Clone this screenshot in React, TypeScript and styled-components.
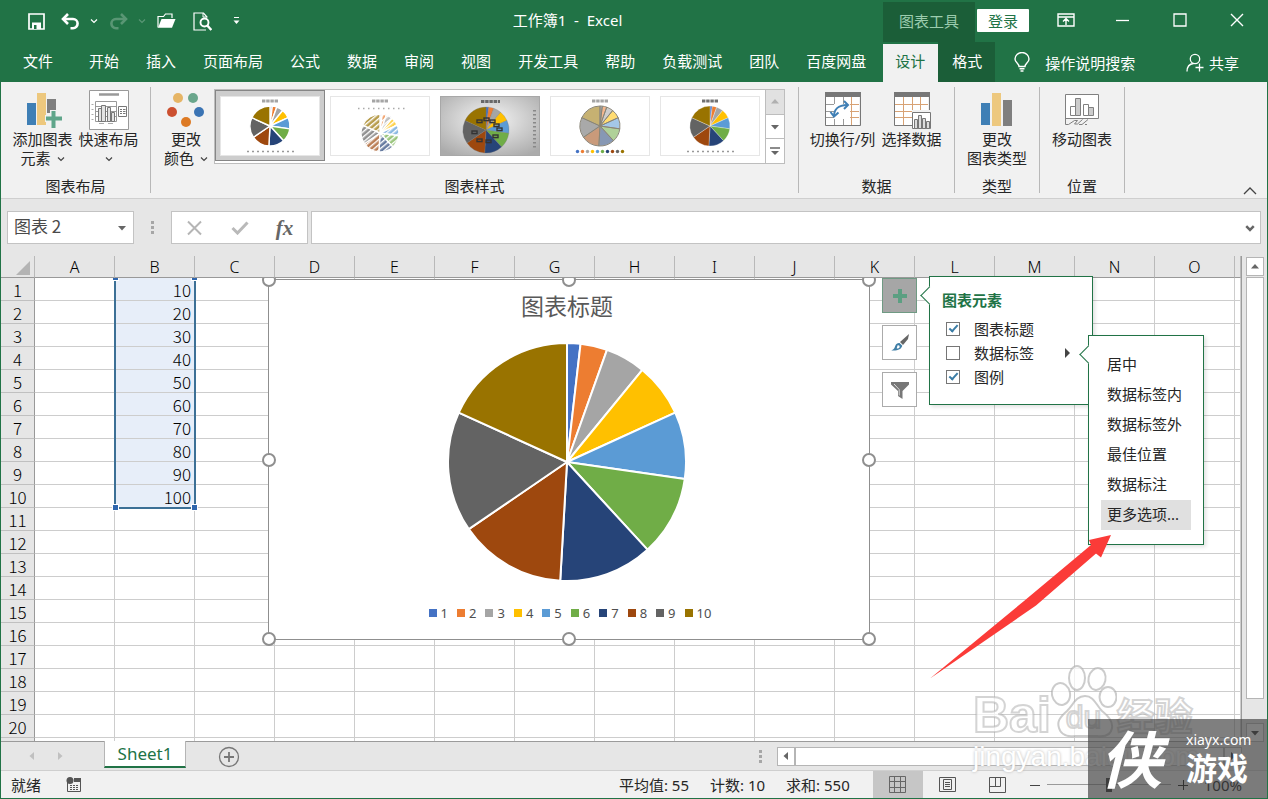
import React from 'react';
import styled, { createGlobalStyle, css } from 'styled-components';

const GREEN = '#217346';
const UI_FONT = '"Noto Sans", "Noto Sans CJK SC", sans-serif';
const CELL_FONT = '"Noto Sans CJK SC", sans-serif';

const PALETTE = ['#4472c4', '#ed7d31', '#a5a5a5', '#ffc000', '#5b9bd5', '#70ad47', '#264478', '#9e480e', '#636363', '#997300'];
const VALUES = [10, 20, 30, 40, 50, 60, 70, 80, 90, 100];
const COLUMNS = 'ABCDEFGHIJKLMNO'.split('');
const ROWS = Array.from({ length: 20 }, (_, i) => i + 1);

const GlobalStyle = createGlobalStyle`
  *, *::before, *::after { box-sizing: border-box; }
  body { margin: 0; background: #e6e6e6; font-family: ${UI_FONT}; font-size: 15px; color: #262626; overflow: hidden; }
  button, input { font: inherit; color: inherit; }
  button { border: 0; padding: 0; margin: 0; background: none; }
  svg { display: block; flex: none; }
`;

const Window = styled.div`
  position: relative;
  display: flex;
  flex-direction: column;
  height: 100vh;
  border: 1px solid ${GREEN};
  border-top: 0;
  overflow: hidden;
`;

/* ---------- title bar ---------- */

const TitleBar = styled.header`
  display: flex;
  height: 42px;
  background: ${GREEN};
  color: #fff;
`;

const QuickAccess = styled.div`
  display: flex;
  flex: none;
  padding-left: 19px;
`;

const QuickButton = styled.button<{ $w?: number; $dim?: boolean }>`
  display: flex;
  align-items: center;
  justify-content: center;
  width: ${(p) => p.$w ?? 36}px;
  opacity: ${(p) => (p.$dim ? 0.25 : 1)};
`;

const DocumentTitle = styled.h1`
  flex: 1;
  margin: 0;
  font-size: 15px;
  font-weight: 400;
  line-height: 40px;
  text-align: center;
  white-space: pre;
`;

const ContextTitle = styled.div`
  width: 92px;
  margin-top: 2px;
  line-height: 38px;
  text-align: center;
  background: #1b5e38;
  color: #9cccae;
`;

const LoginButton = styled.button`
  width: 52px;
  height: 23px;
  margin: 9px 8px 0 2px;
  line-height: 22px;
  background: #fff;
  color: ${GREEN};
  border-radius: 1px;
`;

const CaptionButton = styled.button`
  display: flex;
  align-items: center;
  justify-content: center;
  width: 57px;
  height: 40px;
  &:last-child { margin-right: 2px; }
`;

/* ---------- tab strip ---------- */

const TabStrip = styled.nav`
  display: flex;
  height: 40px;
  background: ${GREEN};
  color: #fff;
`;

const Tab = styled.button<{ $kind?: 'file' | 'active' | 'context' }>`
  flex: none;
  padding: 0 13px 2px 14px;
  line-height: 36px;
  white-space: nowrap;
  ${(p) => p.$kind === 'file' && css`padding: 0 22px 2px;`}
  ${(p) => p.$kind === 'active' && css`
    margin-left: 4px;
    padding: 0 13px 4px 12px;
    background: #f1f1f1;
    color: ${GREEN};
    margin-top: 2px;
    line-height: 34px;
  `}
  ${(p) => p.$kind === 'context' && css`background: #1b5e38;`}
`;

const TellMe = styled.button`
  display: flex;
  align-items: center;
  gap: 15px;
  margin-left: 19px;
  white-space: nowrap;
`;

const Share = styled(TellMe)`
  gap: 5px;
  margin: 1px 28px 0 auto;
`;

/* ---------- ribbon ---------- */

const Ribbon = styled.section`
  position: relative;
  display: flex;
  flex: none;
  height: 117px;
  background: #f1f1f1;
  border-bottom: 1px solid #cfcfcf;
`;

const Group = styled.div<{ $w: number }>`
  display: flex;
  flex-direction: column;
  justify-content: space-between;
  flex: none;
  width: ${(p) => p.$w}px;
  margin: 5px 0;
  border-right: 1px solid #b8b8b8;
`;

const GroupBody = styled.div`
  display: flex;
  justify-content: center;
`;

const StyleBody = styled(GroupBody)`
  padding-right: 6px;
`;

const GroupLabel = styled.div`
  line-height: 20px;
  margin-bottom: -3px;
  text-align: center;
`;

const RibbonButton = styled.button<{ $w: number }>`
  display: flex;
  flex-direction: column;
  align-items: center;
  flex: none;
  width: ${(p) => p.$w}px;
  padding-top: 3px;
  line-height: 19px;
  white-space: nowrap;
`;

const IconSlot = styled.span`
  display: flex;
  align-items: center;
  justify-content: center;
  height: 40px;
`;

const Line = styled.span`
  display: flex;
  align-items: center;
  justify-content: center;
  gap: 6px;
  height: 19px;
`;

const Gallery = styled.div`
  display: flex;
  width: 571px;
  height: 75px;
  margin-top: 2px;
  background: #fff;
  border: 1px solid #bdbdbd;
`;

const StyleChoice = styled.button<{ $on?: boolean }>`
  width: 110px;
  height: 71px;
  padding: 4px;
  border: 1px solid ${(p) => (p.$on ? '#868686' : 'transparent')};
  background: ${(p) => (p.$on ? '#cdcdcd' : 'none')};
`;

const GalleryScroll = styled.div`
  display: flex;
  flex-direction: column;
  width: 19px;
  border-left: 1px solid #bdbdbd;
`;

const GalleryStep = styled.button<{ $off?: boolean }>`
  display: flex;
  flex: 1;
  align-items: center;
  justify-content: center;
  background: ${(p) => (p.$off ? '#e1e1e1' : '#fff')};
  & + & { border-top: 1px solid #bdbdbd; }
`;

const Collapse = styled.button`
  align-self: flex-end;
  margin: 0 10px 3px auto;
`;

/* ---------- formula bar ---------- */

const FormulaBar = styled.div`
  display: flex;
  align-items: center;
  flex: none;
  height: 57px;
  padding: 0 6px;
  background: #e6e6e6;
`;

const Field = styled.div<{ $w?: number }>`
  display: flex;
  align-items: center;
  flex: ${(p) => (p.$w ? 'none' : '1')};
  width: ${(p) => (p.$w ? `${p.$w}px` : 'auto')};
  height: 33px;
  min-width: 0;
  background: #fff;
  border: 1px solid #c3c3c3;
`;

const FieldInput = styled.input`
  flex: 1;
  min-width: 0;
  height: 30px;
  padding: 0 6px 4px;
  border: 0;
  outline: 0;
  background: none;
  font-family: ${CELL_FONT};
  font-size: 17px;
  color: #4a4a4a;
`;

const FieldButton = styled.button<{ $w: number }>`
  display: flex;
  align-items: center;
  justify-content: center;
  width: ${(p) => p.$w}px;
  height: 31px;
`;

const Grip = styled.span<{ $w: number }>`
  display: flex;
  justify-content: center;
  flex: none;
  width: ${(p) => p.$w}px;
`;

const FxMark = styled.span`
  font-family: "Liberation Serif", serif;
  font-size: 21px;
  line-height: 28px;
  font-style: italic;
  font-weight: 700;
  color: #666;
`;

/* ---------- sheet ---------- */

const SheetArea = styled.main`
  position: relative;
  display: flex;
  flex: 1;
  min-height: 0;
  background: #e6e6e6;
`;

const GridViewport = styled.div`
  position: relative;
  flex: 1;
  min-width: 0;
  overflow: hidden;
  background: #fff;
  border-right: 1px solid #9b9b9b;
  border-bottom: 1px solid #9b9b9b;
`;

const Grid = styled.table`
  width: 100%;
  table-layout: fixed;
  border-collapse: separate;
  border-spacing: 0;
  font-family: ${CELL_FONT};
  font-size: 17px;
  font-weight: 300;
  color: #000;
`;

const HeadCell = styled.th`
  height: 22px;
  padding: 2px 0 0;
  line-height: 19px;
  font-family: "Noto Sans", sans-serif;
  font-size: 16px;
  font-weight: 300;
  background: #e6e6e6;
  border-right: 1px solid #b9b9b9;
  border-bottom: 1px solid #999;
  svg { margin: 0 4px 0 auto; }
`;

const RowHead = styled.th`
  height: 23px;
  padding: 2px 0 0;
  line-height: 20px;
  font-weight: 300;
  background: #e6e6e6;
  border-right: 1px solid #999;
  border-bottom: 1px solid #c0c0c0;
`;

const Cell = styled.td<{ $picked?: boolean }>`
  height: 23px;
  padding: 2px 3px 0 0;
  line-height: 20px;
  text-align: right;
  background: ${(p) => (p.$picked ? '#e7eef9' : '#fff')};
  border-right: 1px solid #cdcdcd;
  border-bottom: 1px solid #cdcdcd;
`;

const ObjectLayer = styled.div`
  position: absolute;
  inset: 22px 0 0 0;
  overflow: hidden;
`;

const RangeOutline = styled.div`
  position: absolute;
  left: 113px;
  top: 0;
  width: 82px;
  height: 231px;
  border: 2px solid #3c7096;
  border-top: 0;
`;

const RangeHandle = styled.span<{ $right?: boolean; $bottom?: boolean }>`
  position: absolute;
  ${(p) => (p.$right ? 'right: -3px;' : 'left: -3px;')}
  ${(p) => (p.$bottom ? 'bottom: -3px;' : 'top: -3px;')}
  width: 5px;
  height: 5px;
  background: #2f66ae;
  outline: 1px solid #fff;
`;

const ChartFrame = styled.figure`
  position: absolute;
  left: 267px;
  top: 1px;
  display: flex;
  flex-direction: column;
  align-items: center;
  width: 602px;
  height: 361px;
  margin: 0;
  padding: 12px 4px 0 0;
  background: #fff;
  border: 1px solid #8f8f8f;
`;

const ChartTitle = styled.figcaption`
  margin-bottom: 23px;
  line-height: 28px;
  font-size: 23px;
  color: #595959;
`;

const Legend = styled.ul`
  display: flex;
  gap: 9px;
  margin: 24px 0 0 6px;
  padding: 0;
  list-style: none;
  font-size: 13px;
  line-height: 16px;
  color: #4f4f4f;
`;

const LegendItem = styled.li<{ $color: string }>`
  display: flex;
  align-items: center;
  gap: 4px;
  &::before { content: ''; width: 8px; height: 8px; background: ${(p) => p.$color}; }
`;

const Handle = styled.span<{ $x: number; $y: number }>`
  position: absolute;
  left: ${(p) => p.$x}%;
  top: ${(p) => p.$y}%;
  width: 14px;
  height: 14px;
  margin: -7px;
  background: #fff;
  border: 2px solid #8f8f8f;
  border-radius: 50%;
`;

const ChartTools = styled.div`
  position: absolute;
  left: 881px;
  top: 22px;
  display: flex;
  flex-direction: column;
  gap: 12px;
`;

const ChartTool = styled.button<{ $on?: boolean }>`
  display: flex;
  align-items: center;
  justify-content: center;
  width: 35px;
  height: 35px;
  background: ${(p) => (p.$on ? '#a6a6a6' : '#fff')};
  border: 1px solid ${(p) => (p.$on ? '#6f9a83' : '#ababab')};
`;

const Callout = styled.div`
  position: absolute;
  background: #fff;
  border: 1px solid ${GREEN};
  box-shadow: 2px 2px 4px rgba(0, 0, 0, 0.12);
  &::before {
    content: '';
    position: absolute;
    left: -7px;
    top: 12px;
    width: 13px;
    height: 13px;
    background: #fff;
    border: solid ${GREEN};
    border-width: 0 0 1px 1px;
    transform: rotate(45deg);
  }
`;

const ElementsCallout = styled(Callout)`
  left: 928px;
  top: 20px;
  width: 164px;
  height: 129px;
  padding: 11px 12px 0;
`;

const CalloutHeading = styled.h2`
  margin: 0 0 5px;
  font-size: 15px;
  line-height: 24px;
  font-weight: 700;
  color: ${GREEN};
`;

const ElementRow = styled.label`
  display: flex;
  align-items: center;
  height: 24px;
  padding-left: 4px;
  line-height: 20px;
`;

const TickBox = styled.input`
  appearance: none;
  position: relative;
  width: 14px;
  height: 14px;
  margin: 0 14px 0 0;
  background: #fff;
  border: 1px solid #767676;
  &:checked::after {
    content: '';
    position: absolute;
    left: 4px;
    top: 0;
    width: 5px;
    height: 9px;
    border: solid #3a7ca5;
    border-width: 0 2px 2px 0;
    transform: rotate(42deg);
  }
`;

const RowText = styled.span`
  padding-bottom: 1px;
`;

const SubArrow = styled.svg`
  margin-left: auto;
  margin-right: 9px;
`;

const LabelsCallout = styled(Callout)`
  left: 1087px;
  top: 79px;
  width: 116px;
  height: 210px;
  padding: 14px 12px;
`;

const MenuItem = styled.button<{ $on?: boolean }>`
  display: block;
  width: 90px;
  height: 30px;
  padding: 0 0 4px 6px;
  text-align: left;
  white-space: nowrap;
  background: ${(p) => (p.$on ? '#e0e0e0' : 'none')};
`;

const VScroll = styled.div`
  display: flex;
  flex-direction: column;
  width: 25px;
  padding: 1px 3px 0 4px;
`;

const ScrollButton = styled.button`
  display: flex;
  align-items: center;
  justify-content: center;
  flex: none;
  width: 18px;
  height: 19px;
  background: #fff;
  border: 1px solid #b5b5b5;
`;

const VThumb = styled.div`
  flex: 1;
  margin: 1px 0 24px;
  background: #fff;
  border: 1px solid #b5b5b5;
`;

/* ---------- sheet tabs and status bar ---------- */

const SheetTabs = styled.div`
  display: flex;
  flex: none;
  height: 28px;
  background: #e6e6e6;
`;

const SheetNav = styled.div`
  display: flex;
  align-items: center;
  gap: 18px;
  width: 103px;
  padding-left: 26px;
`;

const SheetTab = styled.button`
  width: 82px;
  height: 27px;
  margin-top: -1px;
  z-index: 1;
  line-height: 22px;
  font-size: 17px;
  color: ${GREEN};
  background: #fff;
  border: solid #b5b5b5;
  border-width: 0 1px;
  border-bottom: 2px solid ${GREEN};
`;

const AddSheet = styled.button`
  margin: 4px auto 0 32px;
  height: 22px;
`;

const HScroll = styled.div`
  display: flex;
  align-items: center;
  width: 490px;
  padding-right: 25px;
`;

const HThumb = styled.div`
  flex: 1;
  height: 19px;
  background: #fff;
  border: 1px solid #b5b5b5;
`;

const StatusBar = styled.footer`
  display: flex;
  align-items: center;
  flex: none;
  height: 28px;
  padding: 0 25px 0 10px;
  background: #f1f1f1;
  border-top: 1px solid #cfcfcf;
  white-space: nowrap;
`;

const Ready = styled.span`
  margin-right: 25px;
`;

const Summary = styled.span`
  margin-right: 21px;
`;

const Stats = styled.div`
  display: flex;
  margin-left: auto;
  margin-right: 2px;
`;

const ViewButton = styled.button<{ $on?: boolean }>`
  display: flex;
  align-items: center;
  justify-content: center;
  width: 50px;
  height: 27px;
  background: ${(p) => (p.$on ? '#c6c6c6' : 'none')};
`;

const ZoomStep = styled.button`
  width: 24px;
  display: flex;
  justify-content: center;
`;

const ZoomSlider = styled.input`
  appearance: none;
  width: 124px;
  height: 16px;
  margin: 0;
  background: linear-gradient(#9a9a9a, #9a9a9a) center / 100% 1px no-repeat;
  &::-webkit-slider-thumb {
    appearance: none;
    width: 6px;
    height: 14px;
    background: #222;
  }
`;

const ZoomValue = styled.span`
  margin-left: 9px;
  color: #000;
`;

/* ---------- overlays ---------- */

const PointerArrow = styled.svg`
  position: absolute;
  left: 928px;
  top: 278px;
`;

const BaiduMark = styled.div`
  position: absolute;
  right: 64px;
  bottom: 24px;
  width: 236px;
  height: 112px;
  color: rgba(255, 255, 255, 0.7);
  -webkit-text-stroke: 2px rgba(170, 170, 170, 0.5);
  pointer-events: none;
`;

const BaiduRow = styled.div`
  display: flex;
  align-items: flex-end;
  height: 76px;
  padding-left: 6px;
  font-family: "Liberation Sans", "Noto Sans CJK SC", sans-serif;
  font-size: 50px;
  font-weight: 700;
  line-height: 46px;
`;

const BaiduPaw = styled.span`
  position: relative;
  width: 66px;
  height: 76px;
`;

const BaiduDu = styled.span`
  position: absolute;
  left: 15px;
  bottom: 3px;
  font-size: 32px;
  line-height: 36px;
  font-weight: 400;
`;

const BaiduWord = styled.span`
  font-size: 38px;
  line-height: 42px;
`;

const BaiduAddress = styled.div`
  padding-left: 6px;
  font-family: "Liberation Sans", sans-serif;
  font-size: 28px;
  line-height: 38px;
  color: #fff;
  -webkit-text-stroke: 0;
  text-shadow: 0 0 3px #b4b4b4;
`;

const GameBadge = styled.div`
  position: absolute;
  right: -1px;
  bottom: -1px;
  display: flex;
  width: 180px;
  height: 80px;
  padding-left: 12px;
  background: rgba(72, 72, 72, 0.7);
  color: #fff;
`;

const BadgeSeal = styled.span`
  width: 86px;
  font-size: 62px;
  line-height: 80px;
  font-style: italic;
  font-weight: 700;
`;

const BadgeText = styled.span`
  display: flex;
  flex-direction: column;
  padding-top: 11px;
  font-size: 14px;
  line-height: 20px;
`;

const BadgeName = styled.strong`
  font-size: 31px;
  line-height: 36px;
`;

/* ---------- drawings ---------- */

function slicePath(cx: number, cy: number, r: number, index: number) {
  const total = VALUES.reduce((a, b) => a + b, 0);
  const before = VALUES.slice(0, index).reduce((a, b) => a + b, 0);
  const a0 = (before / total) * Math.PI * 2;
  const a1 = ((before + VALUES[index]) / total) * Math.PI * 2;
  const pt = (a: number) => `${(cx + r * Math.sin(a)).toFixed(2)} ${(cy - r * Math.cos(a)).toFixed(2)}`;
  return `M${cx} ${cy}L${pt(a0)}A${r} ${r} 0 0 1 ${pt(a1)}Z`;
}

function Slices({ cx, cy, r, gap, line = '#fff' }: { cx: number; cy: number; r: number; gap: number; line?: string }) {
  return (
    <g stroke={line} strokeWidth={gap} strokeLinejoin="round">
      {PALETTE.map((c, i) => <path key={c} d={slicePath(cx, cy, r, i)} fill={c} />)}
    </g>
  );
}

function Thumbnail({ kind }: { kind: number }) {
  const cy = [30, 37, 34, 30, 30][kind];
  const cx = [50, 50, 46, 50, 50][kind];
  const r = [20, 19, 23, 20, 20][kind];
  return (
    <svg width="100" height="60" viewBox="0 0 100 60">
      <defs>
        <radialGradient id={`bg${kind}`} cx="0.5" cy="0.4" r="0.7">
          <stop offset="0" stopColor="#f6f6f6" /><stop offset="1" stopColor="#ababab" />
        </radialGradient>
        <pattern id={`hatch${kind}`} width="4" height="4" patternUnits="userSpaceOnUse" patternTransform="rotate(50)">
          <rect width="1.4" height="4" fill="#fff" />
        </pattern>
      </defs>
      <rect x="0.5" y="0.5" width="99" height="59" fill={kind === 2 ? `url(#bg${kind})` : '#fff'} stroke={kind === 2 ? '#a8a8a8' : '#e6e6e6'} />
      <g opacity={kind === 1 ? 0.7 : kind === 3 ? 0.55 : 1}>
        <Slices cx={cx} cy={cy} r={r} gap={kind === 0 || kind === 1 ? 1.4 : 0.3} line={kind === 2 ? '#777' : '#fff'} />
      </g>
      {kind === 1 && <circle cx={cx} cy={cy} r={r} fill="url(#hatch1)" />}
      {kind === 3 && <g fill="none" stroke="#8a8577" strokeWidth="1">{VALUES.map((v, i) => <path key={v} d={slicePath(cx, cy, r, i)} />)}</g>}
      {kind === 2 && (
        <g fill="none" stroke="#333" strokeWidth="1.4">
          {[[37, 24], [44, 22], [50, 24], [54, 28], [57, 32], [53, 39], [46, 44], [37, 43], [32, 35]].map(([x, y]) => (
            <rect key={`${x}-${y}`} x={x} y={y} width="5" height="2.6" />
          ))}
        </g>
      )}
      <path d={kind === 2 ? 'M41 5.5h19' : 'M42 5h16'} stroke={kind === 2 || kind === 4 ? '#444' : '#888'} strokeWidth="3" strokeDasharray="3.4 0.8" opacity="0.75" />
      {kind === 2 && <path d="M94.500 14v40" stroke="#888" strokeWidth="3" strokeDasharray="1.500 2.500" />}
      {kind === 1 && <path d="M28 12.500h47" stroke="#aaa" strokeWidth="1.500" strokeDasharray="1.500 3.500" />}
      {(kind === 0 || kind === 4) && <path d="M27 55.500h48" stroke="#999" strokeWidth="1.500" strokeDasharray="2 3" />}
      {kind === 3 && PALETTE.map((c, i) => <circle key={c} cx={27.5 + i * 5} cy="55.5" r="1.7" fill={c} />)}
    </svg>
  );
}

const Chevron = ({ size = 8, color = '#444', width = 1.2 }: { size?: number; color?: string; width?: number }) => (
  <svg width={size} height={size} viewBox="0 0 8 8" fill="none" stroke={color} strokeWidth={width}><path d="M1 2.500l3 3 3-3" /></svg>
);

const Triangle = ({ dir, color = '#666' }: { dir: 'up' | 'down' | 'left' | 'right'; color?: string }) => {
  const d = { up: 'M1 6.500h8L5 2z', down: 'M1 3h8L5 7.500z', left: 'M7 1v8L2.500 5z', right: 'M3 1v8l4.500-4z' }[dir];
  return <svg width="10" height="10" viewBox="0 0 10 10"><path d={d} fill={color} /></svg>;
};

const Dots = () => (
  <svg width="4" height="14" viewBox="0 0 4 14" fill="#a6a6a6"><path d="M0 0h3v3H0zM0 5h3v3H0zM0 10h3v3H0z" /></svg>
);

const SaveIcon = () => (
  <svg width="17" height="17" viewBox="0 0 17 17"><path d="M1 1h15v15H1z" fill="none" stroke="#fff" strokeWidth="1.700" /><path d="M4 9.500h9V16H4z" fill="#fff" /><path d="M6 12h2.500v4H6z" fill={GREEN} /></svg>
);

const UndoIcon = ({ flip }: { flip?: boolean }) => (
  <svg width="19" height="17" viewBox="0 0 19 17" fill="none" stroke="#fff" strokeWidth="2.600">
    <g transform={flip ? 'translate(19 0) scale(-1 1)' : undefined}>
      <path d="M7 1L2 6l5 5" /><path d="M2.500 6H12a4.600 4.600 0 0 1 0 9.200H9.500" />
    </g>
  </svg>
);

const OpenIcon = () => (
  <svg width="19" height="16" viewBox="0 0 19 16"><path d="M1 14.500V3.500h5.500l2-2.500H15v4" fill="none" stroke="#fff" strokeWidth="1.200" /><path d="M4.500 6H18.500L15 14.800H1z" fill="#fff" /></svg>
);

const PreviewIcon = () => (
  <svg width="19" height="19" viewBox="0 0 19 19" fill="none" stroke="#fff"><path d="M14 5.500V5L10.500 1H1v17h12" strokeWidth="1.200" /><path d="M10 1v4h4" /><circle cx="11.500" cy="10.500" r="4" strokeWidth="1.900" /><path d="M14.300 13.500l4 4.500" strokeWidth="2.400" /></svg>
);

const BarsIcon = ({ plus }: { plus?: boolean }) => (
  <svg width={plus ? 40 : 32} height="36" viewBox={plus ? '-4 0 40 36' : '0 0 32 36'}>
    <path d="M0 11h9v22H0z" fill="#3f7fb5" /><path d={plus ? 'M10 1h9v32h-9z' : 'M11 1h9v33h-9z'} fill="#edc87e" /><path d={plus ? 'M20 7h9v14h-9z' : 'M22 8h9v26h-9z'} fill="#7f7f7f" />
    {plus && <path d="M18 23h5v-5h7v5h5v7h-5v6h-7v-6h-5z" fill="#f1f1f1" />}
    {plus && <path d="M19 24.500h5.500V19h4v5.500H35v4h-6.500V36h-4v-7.500H19z" fill="#5fa58a" />}
  </svg>
);

const LayoutIcon = () => (
  <svg width="40" height="40" viewBox="0 0 40 40" fill="none" stroke="#777">
    <path d="M.5.5h39v39H.5z" fill="#fff" stroke="#999" /><path d="M10 4.500h20" stroke="#999" strokeWidth="2.500" />
    <path d="M6.500 11.500h21v20h-21zM6.500 16.500h21M6.500 21.500h21M6.500 26.500h21" stroke="#999" />
    <path d="M9.500 18.500h3v13h-3zM12.500 15.500h4v16h-4zM18.500 17.500h3v14h-3zM22.500 22.500h3v9h-3z" fill="#e3e3e3" />
    <path d="M29.500 16.500h8v10h-8zM31 19.500h2M31 21.500h2M31 23.500h2M34 19.500h2.500M34 21.500h2.500M34 23.500h2.500" />
    <path d="M2.500 14.500h2M2.500 19.500h2M2.500 24.500h2M2.500 29.500h2M10 33.500h5M19 33.500h5" stroke="#aaa" />
  </svg>
);

const ColorsIcon = () => (
  <svg width="38" height="36" viewBox="0 0 38 36"><circle cx="11" cy="6" r="5" fill="#e6b566" /><circle cx="26" cy="6" r="5" fill="#6aa68c" /><circle cx="5" cy="20" r="5" fill="#cc5030" /><circle cx="32" cy="20" r="5" fill="#3b74b4" /><circle cx="19" cy="30" r="5" fill="#dd7a24" /></svg>
);

const TableIcon = ({ swap }: { swap?: boolean }) => (
  <svg width="38" height="37" viewBox="-1 0 38 37" fill="none">
    <path d="M1 4h33v29H1z" fill="#fff" /><path d="M1 12.500h33M1 19.500h33M1 25.500h33M9.500 5v28M18.500 5v28M26.500 5v28" stroke={swap ? '#9a9a9a' : '#d8a274'} />
    {swap && <path d="M18.500 12.500H34M18.500 19.500H34M18.500 25.500H34M26.500 5v28" stroke="#d8a274" />}
    <path d="M.5 1v32.500h35V1" stroke="#777" /><path d="M0 0h36v5H0z" fill="#777" />
    {swap && <g stroke="#3f7fb5" strokeWidth="2"><path d="M9 12h16v15H9z" fill="#fff" stroke="none" /><path d="M9 24c0-6 4-11 13-11" /><path d="M19 9l4 4-4 4M5.500 20L9 24.500l4.500-4" /></g>}
    {!swap && <g stroke="#777"><path d="M18 18h19v19H18z" fill="#f1f1f1" stroke="none" /><path d="M18.500 20.500h18v16h-18z" fill="#fff" /><path d="M20.500 27.500h3v9h-3zM24.500 23.500h3v13h-3zM28.500 26.500h3v10h-3zM32.500 29.500h3v7h-3z" fill="#ddd" /></g>}
  </svg>
);

const MoveIcon = () => (
  <svg width="35" height="32" viewBox="0 0 35 32" fill="none" stroke="#808080">
    <path d="M.5.5h33v24H.5z" fill="#fff" /><path d="M5.500 12.500h5v9h-5z" fill="#fff" /><path d="M10.500 4.500h5v17h-5z" fill="#ccc" /><path d="M18.500 10.500h5v11h-5z" fill="#fff" /><path d="M23.500 13.500h5v8h-5z" fill="#ccc" />
    <path d="M.5 24v6.500h3l6-4h3l-3 3.500h3l5-4.500M14 30.500h3l6-5M20 30.500h2" />
  </svg>
);

const BrushIcon = () => (
  <svg width="20" height="20" viewBox="0 0 20 20"><path d="M19 1l-1 5-5 6-3-3z" fill="#666" /><path d="M9.500 10l2.800 2.800c-1 3.500-4.500 5.200-11 4.700 3-1 3.200-2.600 4-4.700.8-2 2.300-3 4.200-2.800z" fill="#3f7ea6" /><path d="M7.500 12.500c1.500-.5 2.500.5 2 2-.6 1-1.800 1.200-2.800.8" fill="#fff" /></svg>
);

const FilterIcon = () => (
  <svg width="20" height="20" viewBox="0 0 20 20"><path d="M1 2h18v2.500L12.500 11v8L8 16v-5L1 4.500z" fill="#777" /><path d="M4 4l5.200 5.500v6" fill="none" stroke="#ddd" /></svg>
);

/* ---------- sections ---------- */

const TABS = ['开始', '插入', '页面布局', '公式', '数据', '审阅', '视图', '开发工具', '帮助', '负载测试', '团队', '百度网盘'];
const HANDLES = [[0, 0], [50, 0], [100, 0], [0, 50], [100, 50], [0, 100], [50, 100], [100, 100]];

function Header() {
  return (
    <>
      <TitleBar>
        <QuickAccess>
          <QuickButton $w={32} aria-label="保存"><SaveIcon /></QuickButton>
          <QuickButton aria-label="撤消"><UndoIcon /></QuickButton>
          <QuickButton $w={12} aria-label="撤消列表"><Chevron size={8} color="#fff" /></QuickButton>
          <QuickButton $dim aria-label="恢复"><UndoIcon flip /></QuickButton>
          <QuickButton $w={12} $dim aria-label="恢复列表"><Chevron size={8} color="#fff" /></QuickButton>
          <QuickButton aria-label="打开"><OpenIcon /></QuickButton>
          <QuickButton aria-label="打印预览"><PreviewIcon /></QuickButton>
          <QuickButton $w={32} aria-label="自定义">
            <svg width="7" height="8" viewBox="0 0 7 8"><path d="M1 .5h5" stroke="#fff" /><path d="M.5 3.500h6l-3 3.500z" fill="#fff" /></svg>
          </QuickButton>
        </QuickAccess>
        <DocumentTitle>{'工作簿1  -  Excel'}</DocumentTitle>
        <ContextTitle>图表工具</ContextTitle>
        <LoginButton>登录</LoginButton>
        <CaptionButton aria-label="功能区选项">
          <svg width="18" height="14" viewBox="0 0 18 14" fill="none" stroke="#fff" strokeWidth="1.400"><path d="M1 1h16v12H1zM1 4h16M9 12V6M6 8.500L9 5.500l3 3" /></svg>
        </CaptionButton>
        <CaptionButton aria-label="最小化"><svg width="14" height="14" viewBox="0 0 14 14" stroke="#fff" strokeWidth="1.300"><path d="M0 7.500h13" /></svg></CaptionButton>
        <CaptionButton aria-label="最大化"><svg width="14" height="14" viewBox="0 0 14 14" fill="none" stroke="#fff" strokeWidth="1.300"><path d="M1 1h12v12H1z" /></svg></CaptionButton>
        <CaptionButton aria-label="关闭"><svg width="14" height="14" viewBox="0 0 14 14" stroke="#fff" strokeWidth="1.400"><path d="M1 1l12 12M13 1L1 13" /></svg></CaptionButton>
      </TitleBar>
      <TabStrip>
        <Tab $kind="file">文件</Tab>
        {TABS.map((t) => <Tab key={t}>{t}</Tab>)}
        <Tab $kind="active">设计</Tab>
        <Tab $kind="context">格式</Tab>
        <TellMe>
          <svg width="16" height="20" viewBox="0 0 16 20" fill="none" stroke="#fff" strokeWidth="1.400"><path d="M5 14.500c0-3-4-4-4-7.500a7 6.500 0 0 1 14 0c0 3.500-4 4.500-4 7.500z" /><path d="M5.500 16.800h5M6.500 19h3" /></svg>
          操作说明搜索
        </TellMe>
        <Share>
          <svg width="18" height="19" viewBox="0 0 18 19" fill="none" stroke="#fff" strokeWidth="1.300"><circle cx="9" cy="6" r="4.700" /><path d="M1 18.500c0-5 2.500-7.500 6.500-8M13.500 10.500v8M9.500 14.500h8" /></svg>
          共享
        </Share>
      </TabStrip>
    </>
  );
}

function RibbonBar() {
  return (
    <Ribbon>
      <Group $w={150}>
        <GroupBody>
          <RibbonButton $w={66}><IconSlot><BarsIcon plus /></IconSlot><Line>添加图表</Line><Line>元素 <Chevron /></Line></RibbonButton>
          <RibbonButton $w={66}><IconSlot><LayoutIcon /></IconSlot><Line>快速布局</Line><Line><Chevron /></Line></RibbonButton>
        </GroupBody>
        <GroupLabel>图表布局</GroupLabel>
      </Group>
      <Group $w={648}>
        <StyleBody>
          <RibbonButton $w={56}><IconSlot><ColorsIcon /></IconSlot><Line>更改</Line><Line>颜色 <Chevron /></Line></RibbonButton>
          <Gallery>
            {[0, 1, 2, 3, 4].map((k) => (
              <StyleChoice key={k} $on={k === 0} aria-label={`样式 ${k + 1}`}><Thumbnail kind={k} /></StyleChoice>
            ))}
            <GalleryScroll>
              <GalleryStep $off aria-label="上一行"><Triangle dir="up" color="#b0b0b0" /></GalleryStep>
              <GalleryStep aria-label="下一行"><Triangle dir="down" /></GalleryStep>
              <GalleryStep aria-label="其他"><svg width="10" height="9" viewBox="0 0 10 9"><path d="M0 1h10" stroke="#666" strokeWidth="1.500" /><path d="M1 4h8L5 8z" fill="#666" /></svg></GalleryStep>
            </GalleryScroll>
          </Gallery>
        </StyleBody>
        <GroupLabel>图表样式</GroupLabel>
      </Group>
      <Group $w={156}>
        <GroupBody>
          <RibbonButton $w={70}><IconSlot><TableIcon swap /></IconSlot><Line>切换行/列</Line></RibbonButton>
          <RibbonButton $w={68}><IconSlot><TableIcon /></IconSlot><Line>选择数据</Line></RibbonButton>
        </GroupBody>
        <GroupLabel>数据</GroupLabel>
      </Group>
      <Group $w={85}>
        <GroupBody><RibbonButton $w={66}><IconSlot><BarsIcon /></IconSlot><Line>更改</Line><Line>图表类型</Line></RibbonButton></GroupBody>
        <GroupLabel>类型</GroupLabel>
      </Group>
      <Group $w={85}>
        <GroupBody><RibbonButton $w={66}><IconSlot><MoveIcon /></IconSlot><Line>移动图表</Line></RibbonButton></GroupBody>
        <GroupLabel>位置</GroupLabel>
      </Group>
      <Collapse aria-label="折叠功能区"><svg width="14" height="9" viewBox="0 0 14 9" fill="none" stroke="#444" strokeWidth="1.300"><path d="M1 8l6-6 6 6" /></svg></Collapse>
    </Ribbon>
  );
}

function Formula() {
  return (
    <FormulaBar>
      <Field $w={127}>
        <FieldInput aria-label="名称框" defaultValue="图表 2" />
        <FieldButton $w={22} aria-label="名称列表"><Triangle dir="down" /></FieldButton>
      </Field>
      <Grip $w={37}><Dots /></Grip>
      <Field $w={137}>
        <FieldButton $w={45} aria-label="取消"><svg width="16" height="16" viewBox="0 0 16 16" stroke="#b5b5b5" strokeWidth="2"><path d="M1 1.500l13 13M14 1.500l-13 13" /></svg></FieldButton>
        <FieldButton $w={45} aria-label="输入"><svg width="18" height="14" viewBox="0 0 18 14" fill="none" stroke="#b9b9b9" strokeWidth="3"><path d="M1.500 7l5 5L16.500 1.500" /></svg></FieldButton>
        <FieldButton $w={45} aria-label="插入函数"><FxMark>fx</FxMark></FieldButton>
      </Field>
      <Grip $w={3} />
      <Field>
        <FieldInput aria-label="编辑栏" />
        <FieldButton $w={20} aria-label="展开编辑栏"><Chevron size={10} color="#666" width={2} /></FieldButton>
      </Field>
    </FormulaBar>
  );
}

function Sheet() {
  return (
    <SheetArea>
      <GridViewport>
        <Grid>
          <colgroup>
            <col width={34} />
            {COLUMNS.map((c) => <col key={c} width={80} />)}
            <col />
          </colgroup>
          <thead>
            <tr>
              <HeadCell><svg width="14" height="14" viewBox="0 0 14 14"><path d="M14 0v14H0z" fill="#b4b4b4" /></svg></HeadCell>
              {COLUMNS.map((c) => <HeadCell key={c}>{c}</HeadCell>)}
              <HeadCell />
            </tr>
          </thead>
          <tbody>
            {ROWS.map((r) => (
              <tr key={r}>
                <RowHead>{r}</RowHead>
                {COLUMNS.map((c) => (
                  <Cell key={c} $picked={c === 'B' && r <= 10}>{c === 'B' ? VALUES[r - 1] : null}</Cell>
                ))}
                <Cell />
              </tr>
            ))}
            <tr>
              <RowHead />
              {COLUMNS.map((c) => <Cell key={c} />)}
              <Cell />
            </tr>
          </tbody>
        </Grid>
        <ObjectLayer>
          <RangeOutline>
            <RangeHandle /><RangeHandle $right /><RangeHandle $bottom /><RangeHandle $right $bottom />
          </RangeOutline>
          <ChartFrame>
            <ChartTitle>图表标题</ChartTitle>
            <svg width="238" height="238" viewBox="0 0 238 238"><Slices cx={119} cy={119} r={119} gap={2} /></svg>
            <Legend>{PALETTE.map((c, i) => <LegendItem key={c} $color={c}>{i + 1}</LegendItem>)}</Legend>
            {HANDLES.map(([x, y]) => <Handle key={`${x}-${y}`} $x={x} $y={y} />)}
          </ChartFrame>
        </ObjectLayer>
      </GridViewport>
      <VScroll>
        <ScrollButton aria-label="向上滚动"><Triangle dir="up" /></ScrollButton>
        <VThumb />
        <ScrollButton aria-label="向下滚动"><Triangle dir="down" color="#222" /></ScrollButton>
      </VScroll>
      <ChartTools>
        <ChartTool $on aria-label="图表元素"><svg width="14" height="14" viewBox="0 0 14 14"><path d="M5 0h4v5h5v4H9v5H5V9H0V5h5z" fill="#5c9f82" /></svg></ChartTool>
        <ChartTool aria-label="图表样式"><BrushIcon /></ChartTool>
        <ChartTool aria-label="图表筛选器"><FilterIcon /></ChartTool>
      </ChartTools>
      <ElementsCallout>
        <CalloutHeading>图表元素</CalloutHeading>
        <ElementRow><TickBox type="checkbox" defaultChecked /><RowText>图表标题</RowText></ElementRow>
        <ElementRow><TickBox type="checkbox" /><RowText>数据标签</RowText><SubArrow width="6" height="10" viewBox="0 0 6 10"><path d="M0 0v10l5-5z" fill="#444" /></SubArrow></ElementRow>
        <ElementRow><TickBox type="checkbox" defaultChecked /><RowText>图例</RowText></ElementRow>
      </ElementsCallout>
      <LabelsCallout>
        {['居中', '数据标签内', '数据标签外', '最佳位置', '数据标注', '更多选项...'].map((t, i) => <MenuItem key={t} $on={i === 5}>{t}</MenuItem>)}
      </LabelsCallout>
      <PointerArrow width="184" height="146" viewBox="0 0 184 146"><path d="M182 1L160 6l2 5L95 67 1 144.500l106-73 60-52 5 4z" fill="#fb3b38" /></PointerArrow>
    </SheetArea>
  );
}

function Footer() {
  return (
    <>
      <SheetTabs>
        <SheetNav><Triangle dir="left" color="#c0c0c0" /><Triangle dir="right" color="#c0c0c0" /></SheetNav>
        <SheetTab>Sheet1</SheetTab>
        <AddSheet aria-label="新工作表"><svg width="22" height="22" viewBox="0 0 22 22" fill="none" stroke="#777"><circle cx="11" cy="11" r="9.500" strokeWidth="1.300" /><path d="M11 6v10M6 11h10" strokeWidth="1.800" /></svg></AddSheet>
        <Grip $w={32}><svg width="4" height="28" viewBox="0 0 4 28" fill="#a6a6a6"><path d="M0 8h3v3H0zM0 13h3v3H0zM0 18h3v3H0z" /></svg></Grip>
        <HScroll>
          <ScrollButton aria-label="向左滚动"><Triangle dir="left" /></ScrollButton>
          <HThumb />
          <ScrollButton aria-label="向右滚动"><Triangle dir="right" color="#222" /></ScrollButton>
        </HScroll>
      </SheetTabs>
      <StatusBar>
        <Ready>就绪</Ready>
        <svg width="16" height="16" viewBox="0 0 16 16" fill="none" stroke="#555"><path d="M1.500 4v10.500h13V3" /><path d="M8 1h7v4H8z" fill="#555" stroke="none" /><circle cx="4" cy="3.500" r="3.500" fill="#555" stroke="none" /><path d="M4 8.500h2M7 8.500h2M10 8.500h2M4 10.500h2M7 10.500h2M10 10.500h2M4 12.500h2M7 12.500h2M10 12.500h2" /></svg>
        <Stats><Summary>平均值: 55</Summary><Summary>计数: 10</Summary><Summary>求和: 550</Summary></Stats>
        <ViewButton $on aria-label="普通"><svg width="17" height="17" viewBox="0 0 17 17" fill="none" stroke="#666"><path d="M.5.5h16v16H.5zM.5 5.500h16M.5 11.500h16M5.500.5v16M11.500.5v16" /></svg></ViewButton>
        <ViewButton aria-label="页面布局"><svg width="17" height="15" viewBox="0 0 17 15" fill="none" stroke="#555"><path d="M.5.5h16v14H.5zM4.500 2.500h8v10h-8zM6 5.500h5M6 7.500h5M6 9.500h5" /></svg></ViewButton>
        <ViewButton aria-label="分页预览"><svg width="17" height="16" viewBox="0 0 17 16" fill="none" stroke="#555"><path d="M.5.5h16v15H.5zM.5 9.500h11v-9M6.500.5v9" /></svg></ViewButton>
        <ZoomStep aria-label="缩小"><svg width="10" height="10" viewBox="0 0 10 10" stroke="#444"><path d="M0 5.500h10" /></svg></ZoomStep>
        <ZoomSlider type="range" min={0} max={100} defaultValue={50} aria-label="缩放" />
        <ZoomStep aria-label="放大"><svg width="10" height="10" viewBox="0 0 10 10" stroke="#000"><path d="M0 5.500h10M5.500 0v10" /></svg></ZoomStep>
        <ZoomValue>100%</ZoomValue>
      </StatusBar>
    </>
  );
}

function Watermarks() {
  return (
    <>
      <BaiduMark>
        <BaiduRow>
          Bai
          <BaiduPaw>
            <svg width="66" height="76" viewBox="0 0 66 76" fill="rgba(255,255,255,.7)" stroke="rgba(170,170,170,.6)" strokeWidth="2">
              <ellipse cx="10" cy="32" rx="9" ry="11" transform="rotate(-12 10 32)" /><ellipse cx="26" cy="16" rx="8" ry="12" /><ellipse cx="46" cy="17" rx="8.500" ry="11" transform="rotate(12 46 17)" /><ellipse cx="57" cy="35" rx="8.500" ry="10" />
              <path d="M34 34c-9 0-12 9-18 15-8 7-10 11-8 17 2 7 9 9 16 8h22c8 1 14-1 15-8 1-7-4-12-10-17-6-6-8-15-17-15z" />
            </svg>
            <BaiduDu>du</BaiduDu>
          </BaiduPaw>
          <BaiduWord>经验</BaiduWord>
        </BaiduRow>
        <BaiduAddress>jingyan.baidu.com</BaiduAddress>
      </BaiduMark>
      <GameBadge>
        <BadgeSeal>侠</BadgeSeal>
        <BadgeText>xiayx.com<BadgeName>游戏</BadgeName></BadgeText>
      </GameBadge>
    </>
  );
}

export default function App() {
  return (
    <Window>
      <GlobalStyle />
      <Header />
      <RibbonBar />
      <Formula />
      <Sheet />
      <Footer />
      <Watermarks />
    </Window>
  );
}
